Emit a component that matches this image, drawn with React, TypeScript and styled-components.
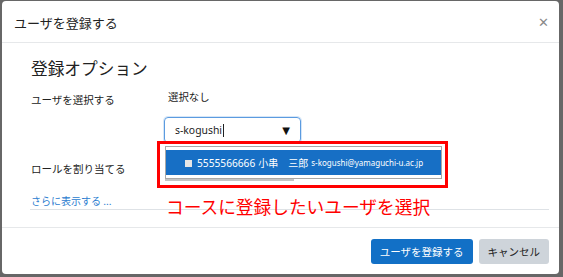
import React from "react";
import styled, { createGlobalStyle } from "styled-components";

const Global = createGlobalStyle`
  html, body { margin: 0; padding: 0; }
  body {
    width: 563px;
    height: 277px;
    overflow: hidden;
    background: #676767;
    font-family: "Noto Sans CJK JP", "Noto Sans", sans-serif;
  }
`;

const Backdrop = styled.div`
  width: 563px;
  height: 277px;
  box-sizing: border-box;
  padding: 1px 4px 3px 2px;
`;

const Modal = styled.div`
  position: relative;
  height: 273px;
  background: #fff;
  border-radius: 4px;
  display: flex;
  flex-direction: column;
  overflow: hidden;
`;

const Header = styled.div`
  height: 41px;
  flex: none;
  display: flex;
  align-items: center;
  justify-content: space-between;
  padding: 0 10px 0 12px;
  border-bottom: 1px solid #e6e8ea;
`;

const Title = styled.div`
  font-size: 13px;
  color: #222;
  line-height: 18px;
  margin-top: 2px;
`;

const Close = styled.div`
  font-family: "DejaVu Sans", sans-serif;
  font-size: 13px;
  font-weight: bold;
  color: #8a8a8a;
  margin-top: 1px;
`;

const Body = styled.div`
  flex: 1;
  padding: 0 10px 0 28px;
`;

const Fieldset = styled.div`
  border-bottom: 1px solid #dee2e6;
  padding-bottom: 0;
`;

const Legend = styled.div`
  font-size: 16.7px;
  line-height: 20px;
  color: #222;
  margin-top: 15px;
  margin-left: 1px;
`;

const Row = styled.div<{ $mt: number }>`
  display: grid;
  grid-template-columns: 134px 1fr;
  margin-top: ${(p) => p.$mt}px;
`;

const Label = styled.div<{ $pt?: number }>`
  font-size: 10.5px;
  line-height: 16px;
  color: #222;
  padding-left: 1px;
  padding-top: ${(p) => p.$pt ?? 0}px;
`;

const Value = styled.div`
  font-size: 10.4px;
  line-height: 16px;
  color: #222;
  padding-left: 4px;
`;

const Field = styled.div`
  position: relative;
`;

const Select = styled.div`
  margin-top: 12px;
  width: 137px;
  height: 26px;
  box-sizing: border-box;
  border: 1.5px solid #5b9be0;
  border-radius: 4px;
  box-shadow: 0 0 0 1px rgba(91, 155, 224, 0.25);
  display: flex;
  align-items: center;
  justify-content: space-between;
  padding: 0 10px 0 10px;
`;

const Typed = styled.span`
  font-family: "Noto Sans", sans-serif;
  font-size: 10.4px;
  color: #222;
  display: inline-flex;
  align-items: center;
`;

const Caret = styled.span`
  display: inline-block;
  width: 1px;
  height: 13px;
  background: #222;
  margin-left: 1px;
`;

const Arrow = styled.span`
  font-family: "DejaVu Sans", sans-serif;
  font-size: 10px;
  color: #111;
`;

const Highlight = styled.div`
  position: absolute;
  left: -7px;
  top: 52px;
  width: 291px;
  height: 47px;
  box-sizing: border-box;
  border: 3px solid #ff0000;
  z-index: 2;
`;

const Dropdown = styled.div`
  position: absolute;
  left: 5px;
  top: 2px;
  width: 277px;
  height: 33px;
  box-sizing: border-box;
  background: #fff;
  border: 1px solid #a8a8a8;
  padding-top: 3px;
  &::after {
    content: "";
    position: absolute;
    left: -1px;
    bottom: -3px;
    width: 129px;
    height: 2px;
    background: #c4c4c4;
  }
`;

const Option = styled.div`
  height: 25px;
  background: #176fc5;
  color: #fff;
  display: flex;
  align-items: center;
  padding-left: 19px;
  font-size: 10px;
`;

const Box = styled.span`
  width: 7px;
  height: 7px;
  background: #e6e6e6;
  margin-right: 5px;
  margin-top: 1px;
`;

const Digits = styled.span`
  font-family: "Noto Sans", sans-serif;
  font-size: 10.2px;
  margin-right: 3px;
`;

const Email = styled.span`
  font-family: "Noto Sans", sans-serif;
  font-size: 8px;
  margin-left: 3px;
`;

const Note = styled.div`
  position: absolute;
  left: 2px;
  top: 106px;
  font-size: 17.7px;
  line-height: 22px;
  color: #ff0000;
  white-space: nowrap;
  z-index: 2;
`;

const More = styled.div`
  margin-top: 16px;
  font-size: 10px;
  line-height: 16px;
  color: #2a7ccf;
  padding-left: 1px;
`;

const Footer = styled.div`
  flex: none;
  height: 47px;
  border-top: 1px solid #e6e8ea;
  display: flex;
  justify-content: flex-end;
  align-items: flex-start;
  gap: 6px;
  padding: 11px 10px 0 0;
  box-sizing: border-box;
`;

const Button = styled.div<{ $primary?: boolean }>`
  height: 25px;
  box-sizing: border-box;
  padding: 0 9px;
  border-radius: 3px;
  display: flex;
  align-items: center;
  font-size: 10.5px;
  color: ${(p) => (p.$primary ? "#fff" : "#222")};
  background: ${(p) => (p.$primary ? "#1270c6" : "#ced4da")};
`;

export default function App() {
  return (
    <>
      <Global />
      <Backdrop>
        <Modal>
          <Header>
            <Title>ユーザを登録する</Title>
            <Close>✕</Close>
          </Header>
          <Body>
            <Fieldset>
              <Legend>登録オプション</Legend>
              <Row $mt={11}>
                <Label $pt={3}>ユーザを選択する</Label>
                <Field>
                  <Value>選択なし</Value>
                  <Select>
                    <Typed>
                      s-kogushi
                      <Caret />
                    </Typed>
                    <Arrow>▼</Arrow>
                  </Select>
                  <Highlight>
                    <Dropdown>
                      <Option>
                        <Box />
                        <Digits>5555566666</Digits>
                        小串　三郎
                        <Email>s-kogushi@yamaguchi-u.ac.jp</Email>
                      </Option>
                    </Dropdown>
                  </Highlight>
                  <Note>コースに登録したいユーザを選択</Note>
                </Field>
              </Row>
              <Row $mt={18}>
                <Label>ロールを割り当てる</Label>
                <div />
              </Row>
              <More>さらに表示する ...</More>
            </Fieldset>
          </Body>
          <Footer>
            <Button $primary>ユーザを登録する</Button>
            <Button>キャンセル</Button>
          </Footer>
        </Modal>
      </Backdrop>
    </>
  );
}
